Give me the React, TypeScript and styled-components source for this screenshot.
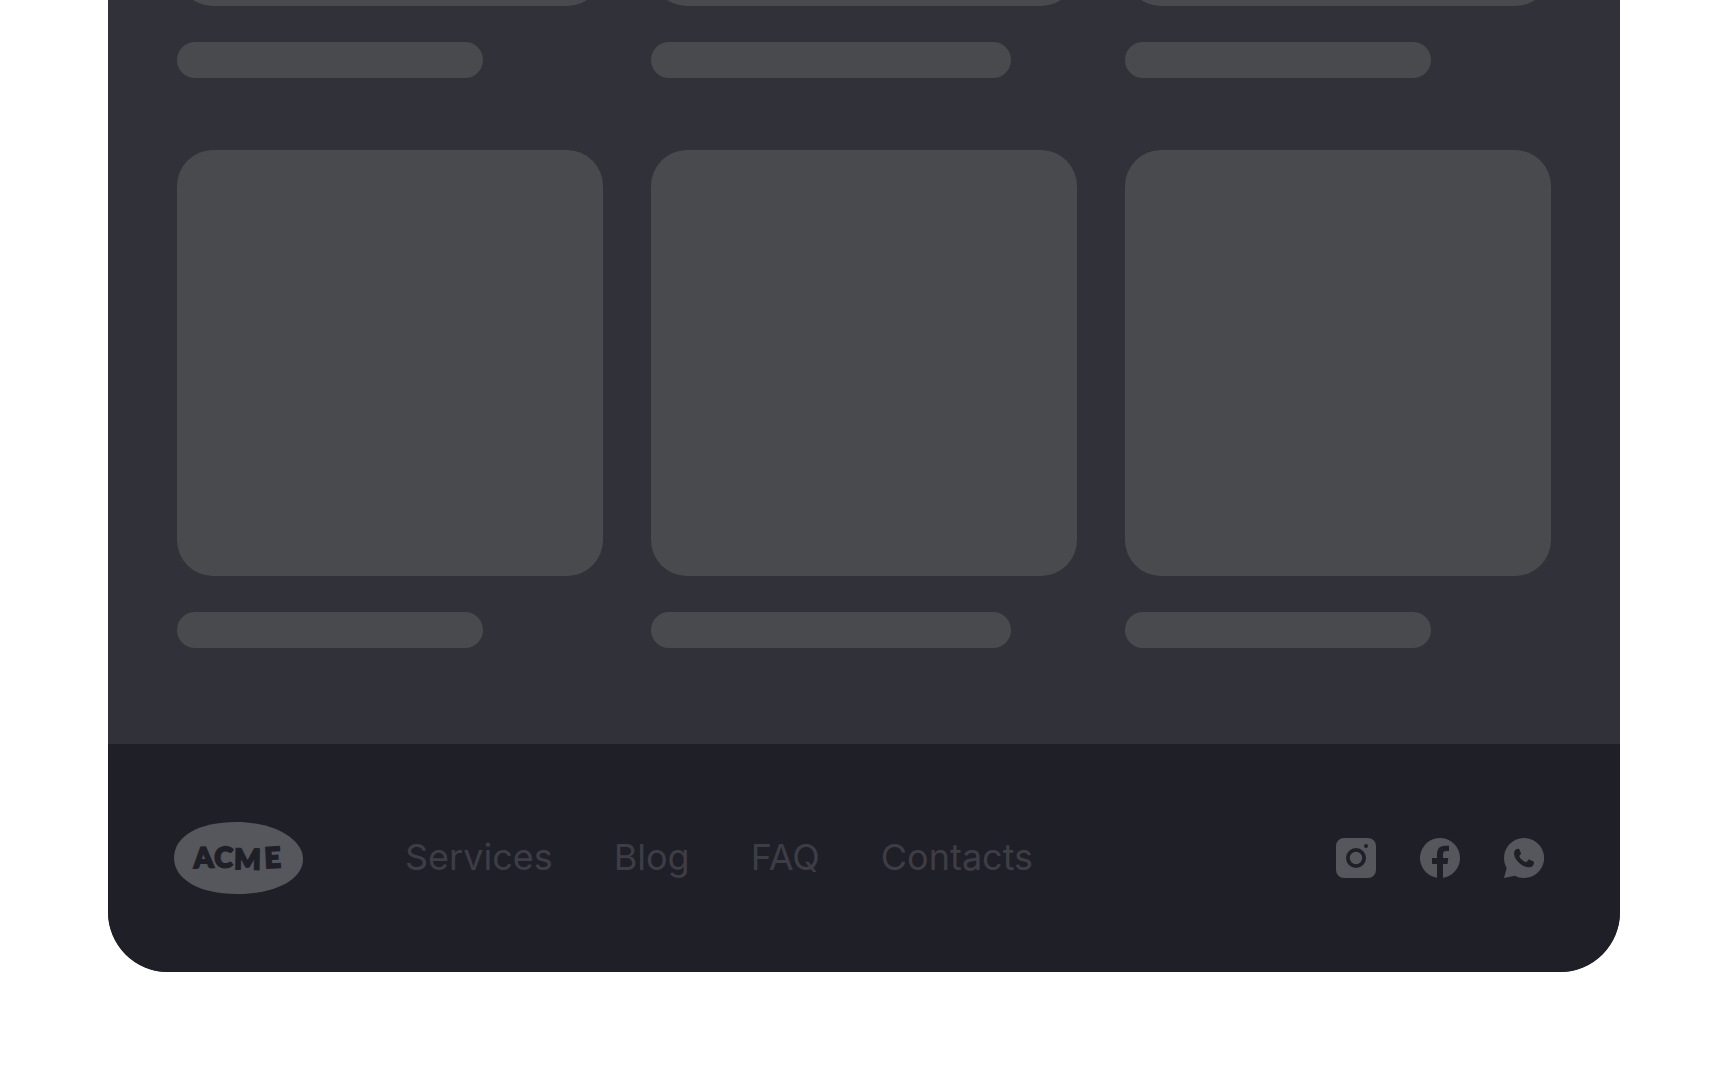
import React from "react";
import styled, { createGlobalStyle } from "styled-components";

const colors = {
  page: "#ffffff",
  panel: "#313139",
  block: "#494a4e",
  footer: "#1f1f27",
  link: "#3e3d45",
  mark: "#56575c",
};

const GlobalStyle = createGlobalStyle`
  *, *::before, *::after { box-sizing: border-box; }
  body {
    margin: 0;
    background: ${colors.page};
    font-family: Inter, "Liberation Sans", sans-serif;
  }
`;

const Page = styled.div`
  display: flex;
  flex-direction: column;
  justify-content: flex-end;
  height: 100vh;
  padding: 0 108px 108px;
  overflow: hidden;
`;

const Panel = styled.div`
  flex-shrink: 0;
  border-radius: 0 0 60px 60px;
  background: ${colors.panel};
  overflow: hidden;
`;

const Gallery = styled.main`
  display: grid;
  grid-template-columns: repeat(3, 1fr);
  gap: 72px 48px;
  padding: 0 69px 96px;
`;

const Card = styled.article`
  display: flex;
  flex-direction: column;
  gap: 36px;
`;

const Thumbnail = styled.div`
  aspect-ratio: 1;
  border-radius: 36px;
  background: ${colors.block};
`;

const Caption = styled.div<{ $wide?: boolean }>`
  width: ${(p) => (p.$wide ? "360px" : "306px")};
  max-width: 100%;
  height: 36px;
  border-radius: 18px;
  background: ${colors.block};
`;

const Footer = styled.footer`
  display: flex;
  align-items: center;
  height: 228px;
  padding: 0 76px 0 66px;
  background: ${colors.footer};
`;

const LogoLink = styled.a`
  display: block;
  width: 129px;
  height: 72px;
  color: ${colors.mark};
`;

const LogoText = styled.text`
  font-family: Lato, sans-serif;
  font-size: 28px;
  font-weight: 900;
  fill: ${colors.footer};
  stroke: ${colors.footer};
  stroke-width: 2px;
`;

const Nav = styled.nav`
  display: flex;
  gap: 61px;
  margin-left: 102px;
  padding-bottom: 2px;
`;

const NavLink = styled.a`
  color: ${colors.link};
  font-size: 36px;
  line-height: 44px;
  text-decoration: none;
`;

const Socials = styled.div`
  display: flex;
  gap: 44px;
  margin-left: auto;
`;

const SocialLink = styled.a`
  display: block;
  width: 40px;
  height: 40px;
  color: ${colors.mark};
`;

const Logo = () => (
  <svg width="129" height="72" viewBox="0 0 129 72" aria-hidden="true">
    <path
      d="M62 0C100 0 129 17 129 37C129 58 101 72 63 72C25 72 0 57 0 36C0 14 25 0 62 0Z"
      fill="currentColor"
    />
    <LogoText x="20 40 60 91" y="46 45 47 46" rotate="-2 2 1 -3">
      ACME
    </LogoText>
  </svg>
);

const InstagramIcon = () => (
  <svg width="40" height="40" viewBox="0 0 40 40" fill="currentColor" aria-hidden="true">
    <path
      fillRule="evenodd"
      d="M8 0H32A8 8 0 0 1 40 8V32A8 8 0 0 1 32 40H8A8 8 0 0 1 0 32V8A8 8 0 0 1 8 0ZM20 10A10 10 0 1 0 20 30A10 10 0 1 0 20 10ZM20 13.800A6.200 6.200 0 1 1 20 26.200A6.200 6.200 0 1 1 20 13.800ZM30 6A2 2 0 1 0 30 10A2 2 0 1 0 30 6Z"
    />
  </svg>
);

const FacebookIcon = () => (
  <svg width="40" height="40" viewBox="0 0 40 40" fill="currentColor" aria-hidden="true">
    <path d="M40 20A20 20 0 1 0 17 39.800V26H12V20H17V16.500C17 10.500 20 7.800 25 7.800H29V13H26.500C24 13 23 14 23 16.500V20H28.300L27.500 26H23V39.800A20 20 0 0 0 40 20Z" />
  </svg>
);

const WhatsAppIcon = () => (
  <svg width="40" height="40" viewBox="0 0 40 40" aria-hidden="true">
    <path
      fill="currentColor"
      d="M20 0A20 20 0 1 1 10.800 37.700L0 40L2.700 30A20 20 0 0 1 20 0Z"
    />
    <path
      fill={colors.footer}
      d="M13.500 10.800C11.500 10.800 10 13 10 15.500C10 19 12.500 22.500 15.500 25.200C18.500 27.800 22 29.500 25.300 29.300C28 29.100 30 27.500 30 24.500C30 23.900 29.700 23.600 29.200 23.300L25.600 21.700C25 21.400 24.500 21.500 24.100 22L22.600 23.900C22.300 24.300 21.900 24.300 21.400 24.100C18.800 22.900 16.800 21 15.500 18.700C15.200 18.200 15.300 17.900 15.600 17.500L16.700 16.200C17 15.800 17.100 15.400 16.900 14.900L15.500 11.600C15.200 10.900 14.900 10.800 13.500 10.800Z"
    />
  </svg>
);

const rows = ["first", "second"];
const columns = [
  { id: "left", wide: false },
  { id: "middle", wide: true },
  { id: "right", wide: false },
];
const links = ["Services", "Blog", "FAQ", "Contacts"];
const socials = [
  { name: "Instagram", Icon: InstagramIcon },
  { name: "Facebook", Icon: FacebookIcon },
  { name: "WhatsApp", Icon: WhatsAppIcon },
];

export default function App() {
  return (
    <>
      <GlobalStyle />
      <Page>
        <Panel>
          <Gallery>
            {rows.map((row) =>
              columns.map((column) => (
                <Card key={`${row}-${column.id}`}>
                  <Thumbnail />
                  <Caption $wide={column.wide} />
                </Card>
              ))
            )}
          </Gallery>
          <Footer>
            <LogoLink href="#" aria-label="ACME">
              <Logo />
            </LogoLink>
            <Nav>
              {links.map((label) => (
                <NavLink key={label} href="#">
                  {label}
                </NavLink>
              ))}
            </Nav>
            <Socials>
              {socials.map(({ name, Icon }) => (
                <SocialLink key={name} href="#" aria-label={name}>
                  <Icon />
                </SocialLink>
              ))}
            </Socials>
          </Footer>
        </Panel>
      </Page>
    </>
  );
}
